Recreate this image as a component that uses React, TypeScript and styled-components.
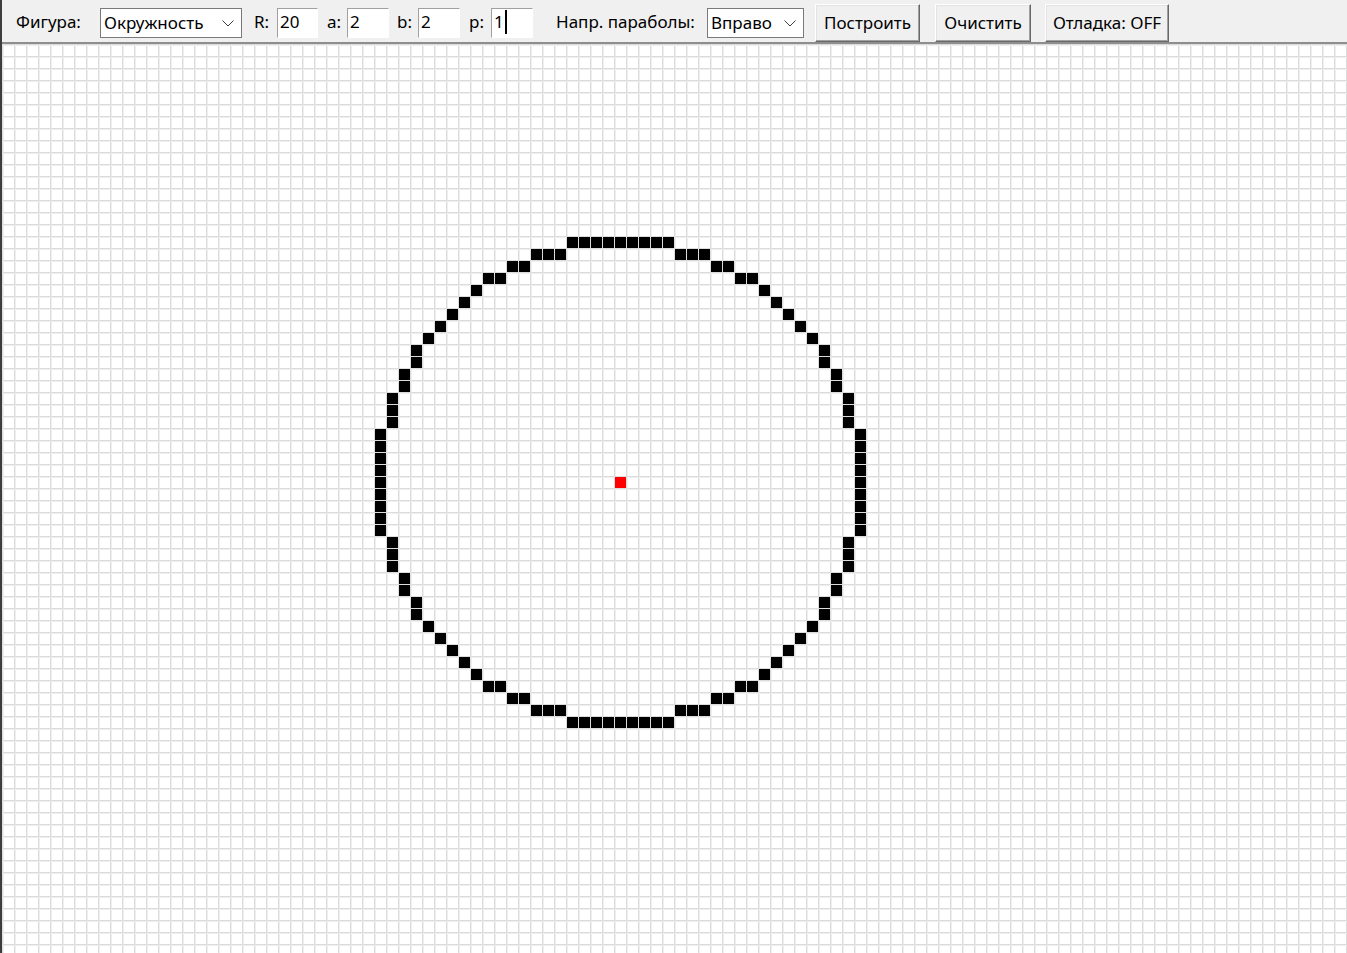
import React from 'react';
import styled, { createGlobalStyle } from 'styled-components';

const GlobalStyle = createGlobalStyle`
  html, body { margin: 0; padding: 0; background: #ffffff; overflow: hidden; }
  body { font-family: "Noto Sans", "Open Sans", sans-serif; }
  #root { width: 1347px; height: 953px; }
`;

const Window = styled.div`
  width: 1347px;
  height: 953px;
  box-sizing: border-box;
  border-left: 2px solid #3d3d3d;
  display: flex;
  flex-direction: column;
  background: #ffffff;
`;

const Toolbar = styled.div`
  flex: none;
  height: 38px;
  padding: 4px 0 0 14px;
  display: flex;
  align-items: center;
  background: #f0f0f0;
  border-bottom: 2px solid #8e8e8e;
  font-size: 17px;
  color: #000000;
`;

const Label = styled.span<{ $w: number }>`
  width: ${(p) => p.$w}px;
  flex: none;
  white-space: nowrap;
  line-height: 30px;
  padding-bottom: 2px;
`;

const Entry = styled.div<{ $w: number; $mr: number }>`
  width: ${(p) => p.$w}px;
  margin-right: ${(p) => p.$mr}px;
  height: 30px;
  box-sizing: border-box;
  flex: none;
  display: flex;
  align-items: center;
  padding: 0 0 2px 2px;
  background: #ffffff;
  border-top: 1px solid #a0a0a0;
  border-left: 1px solid #a0a0a0;
  border-right: 1px solid #ffffff;
  border-bottom: 1px solid #ffffff;
  line-height: 26px;
`;

const Caret = styled.span`
  display: inline-block;
  width: 2px;
  height: 24px;
  margin-left: 1px;
  background: #000000;
`;

const Combo = styled.div<{ $w: number; $mr: number }>`
  width: ${(p) => p.$w}px;
  margin-right: ${(p) => p.$mr}px;
  height: 30px;
  box-sizing: border-box;
  flex: none;
  display: flex;
  align-items: center;
  justify-content: space-between;
  padding: 0 7px 2px 3px;
  background: #ffffff;
  border: 1px solid #7a7a7a;
`;

const Chevron = styled.svg`
  flex: none;
  width: 12px;
  height: 7px;
  margin-top: 2px;
`;

const Button = styled.div<{ $w: number; $mr: number }>`
  width: ${(p) => p.$w}px;
  margin-right: ${(p) => p.$mr}px;
  height: 38px;
  box-sizing: border-box;
  flex: none;
  display: flex;
  align-items: center;
  justify-content: center;
  background: #f0f0f0;
  border-top: 1px solid #ffffff;
  border-left: 1px solid #ffffff;
  border-right: 1px solid #696969;
  border-bottom: 1px solid #696969;
  box-shadow: inset -1px -1px 0 #a0a0a0, inset 1px 1px 0 #e3e3e3;
  padding-bottom: 2px;
`;

const CanvasArea = styled.div`
  flex: 1;
  position: relative;
  overflow: hidden;
  background: #ffffff;
`;

const Board = styled.svg`
  display: block;
`;

const CELL = 12;
const CENTER_COL = 51;
const CENTER_ROW = 36;
const RADIUS = 20;

function circlePoints(r: number): Array<[number, number]> {
  const set = new Set<string>();
  const pts: Array<[number, number]> = [];
  const add = (x: number, y: number) => {
    const k = `${x},${y}`;
    if (!set.has(k)) {
      set.add(k);
      pts.push([x, y]);
    }
  };
  let x = 0;
  let y = r;
  let d = 1 - r;
  while (x <= y) {
    const pairs: Array<[number, number]> = [
      [x, y], [-x, y], [x, -y], [-x, -y],
      [y, x], [-y, x], [y, -x], [-y, -x],
    ];
    pairs.forEach(([a, b]) => add(a, b));
    if (d < 0) {
      d += 2 * x + 3;
    } else {
      d += 2 * (x - y) + 5;
      y -= 1;
    }
    x += 1;
  }
  return pts;
}

const ChevronIcon = () => (
  <Chevron viewBox="0 0 12 7">
    <polyline points="0.5,0.5 6,6 11.5,0.5" fill="none" stroke="#3c3c3c" strokeWidth="1" />
  </Chevron>
);

export default function App() {
  const pts = circlePoints(RADIUS);
  const W = 1345;
  const H = 909;
  return (
    <>
      <GlobalStyle />
      <Window>
        <Toolbar>
          <Label $w={84}>Фигура:</Label>
          <Combo $w={142} $mr={12}>
            <span>Окружность</span>
            <ChevronIcon />
          </Combo>
          <Label $w={23}>R:</Label>
          <Entry $w={41} $mr={9}>20</Entry>
          <Label $w={20}>a:</Label>
          <Entry $w={42} $mr={8}>2</Entry>
          <Label $w={21}>b:</Label>
          <Entry $w={42} $mr={9}>2</Entry>
          <Label $w={22}>p:</Label>
          <Entry $w={42} $mr={23}>
            1<Caret />
          </Entry>
          <Label $w={151}>Напр. параболы:</Label>
          <Combo $w={97} $mr={11}>
            <span>Вправо</span>
            <ChevronIcon />
          </Combo>
          <Button $w={105} $mr={15}>Построить</Button>
          <Button $w={96} $mr={14}>Очистить</Button>
          <Button $w={124} $mr={0}>Отладка: OFF</Button>
        </Toolbar>
        <CanvasArea>
          <Board width={W} height={H} viewBox={`0 0 ${W} ${H}`} shapeRendering="crispEdges">
            <defs>
              <pattern id="grid" width={CELL} height={CELL} patternUnits="userSpaceOnUse">
                <rect x="0" y="0" width={CELL} height={CELL} fill="#ffffff" />
                <rect x="0" y="0" width="1" height={CELL} fill="#dcdcdc" />
                <rect x="1" y="0" width="1" height={CELL} fill="#efefef" />
                <rect x="0" y="0" width={CELL} height="1" fill="#dcdcdc" />
                <rect x="0" y="1" width={CELL} height="1" fill="#efefef" />
              </pattern>
            </defs>
            <rect x="0" y="0" width={W} height={H} fill="url(#grid)" />
            {pts.map(([dx, dy]) => (
              <rect
                key={`${dx},${dy}`}
                x={(CENTER_COL + dx) * CELL + 1}
                y={(CENTER_ROW + dy) * CELL + 1}
                width={11}
                height={11}
                fill="#000000"
              />
            ))}
            <rect
              x={CENTER_COL * CELL + 1}
              y={CENTER_ROW * CELL + 1}
              width={11}
              height={11}
              fill="#ff0000"
            />
          </Board>
        </CanvasArea>
      </Window>
    </>
  );
}
